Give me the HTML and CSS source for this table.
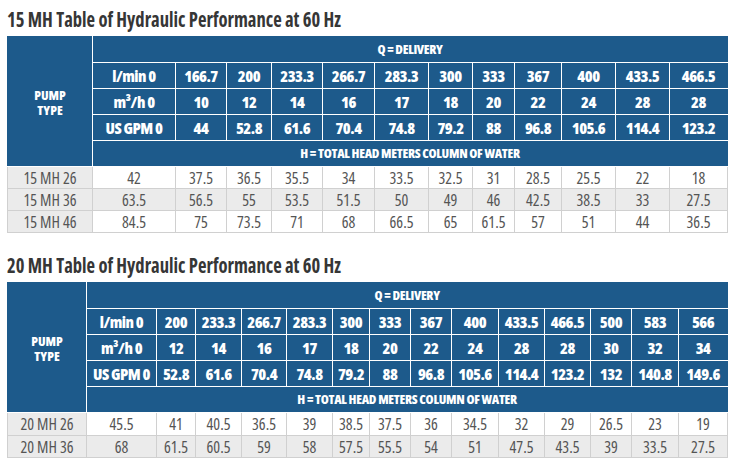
FILE: index.html
```html
<!DOCTYPE html>
<html>
<head>
<meta charset="utf-8">
<link rel="stylesheet" href="styles.css">
</head>
<body>
<div class="page">
  <h2 class="title"><span>15 MH Table of Hydraulic Performance at 60 Hz</span></h2>
  <table class="perf t1">
    <colgroup>
      <col style="width:85px"><col style="width:83px"><col style="width:51px"><col style="width:45px"><col style="width:51px"><col style="width:52px"><col style="width:54px"><col style="width:44px"><col style="width:42px"><col style="width:47px"><col style="width:54px"><col style="width:54px"><col style="width:58px">
    </colgroup>
    <thead>
      <tr><th class="pump" rowspan="5"><span class="ln">PUMP</span><span class="ln">TYPE</span></th><th class="span" colspan="12">Q = DELIVERY</th></tr>
      <tr><th class="unit">l/min 0</th><th>166.7</th><th>200</th><th>233.3</th><th>266.7</th><th>283.3</th><th>300</th><th>333</th><th>367</th><th>400</th><th>433.5</th><th>466.5</th></tr>
      <tr><th class="unit">m³/h 0</th><th>10</th><th>12</th><th>14</th><th>16</th><th>17</th><th>18</th><th>20</th><th>22</th><th>24</th><th>28</th><th>28</th></tr>
      <tr><th class="unit">US GPM 0</th><th>44</th><th>52.8</th><th>61.6</th><th>70.4</th><th>74.8</th><th>79.2</th><th>88</th><th>96.8</th><th>105.6</th><th>114.4</th><th>123.2</th></tr>
      <tr><th class="span" colspan="12">H = TOTAL HEAD METERS COLUMN OF WATER</th></tr>
    </thead>
    <tbody>
      <tr><td class="name">15 MH 26</td><td>42</td><td>37.5</td><td>36.5</td><td>35.5</td><td>34</td><td>33.5</td><td>32.5</td><td>31</td><td>28.5</td><td>25.5</td><td>22</td><td>18</td></tr>
      <tr class="alt"><td class="name">15 MH 36</td><td>63.5</td><td>56.5</td><td>55</td><td>53.5</td><td>51.5</td><td>50</td><td>49</td><td>46</td><td>42.5</td><td>38.5</td><td>33</td><td>27.5</td></tr>
      <tr><td class="name">15 MH 46</td><td>84.5</td><td>75</td><td>73.5</td><td>71</td><td>68</td><td>66.5</td><td>65</td><td>61.5</td><td>57</td><td>51</td><td>44</td><td>36.5</td></tr>
    </tbody>
  </table>

  <h2 class="title second"><span>20 MH Table of Hydraulic Performance at 60 Hz</span></h2>
  <table class="perf t2">
    <colgroup>
      <col style="width:79px"><col style="width:70px"><col style="width:39px"><col style="width:46px"><col style="width:45px"><col style="width:46px"><col style="width:37px"><col style="width:41px"><col style="width:41px"><col style="width:47px"><col style="width:46px"><col style="width:46px"><col style="width:41px"><col style="width:47px"><col style="width:49px">
    </colgroup>
    <thead>
      <tr><th class="pump" rowspan="5"><span class="ln">PUMP</span><span class="ln">TYPE</span></th><th class="span" colspan="14">Q = DELIVERY</th></tr>
      <tr><th class="unit">l/min 0</th><th>200</th><th>233.3</th><th>266.7</th><th>283.3</th><th>300</th><th>333</th><th>367</th><th>400</th><th>433.5</th><th>466.5</th><th>500</th><th>583</th><th>566</th></tr>
      <tr><th class="unit">m³/h 0</th><th>12</th><th>14</th><th>16</th><th>17</th><th>18</th><th>20</th><th>22</th><th>24</th><th>28</th><th>28</th><th>30</th><th>32</th><th>34</th></tr>
      <tr><th class="unit">US GPM 0</th><th>52.8</th><th>61.6</th><th>70.4</th><th>74.8</th><th>79.2</th><th>88</th><th>96.8</th><th>105.6</th><th>114.4</th><th>123.2</th><th>132</th><th>140.8</th><th>149.6</th></tr>
      <tr><th class="span" colspan="14">H = TOTAL HEAD METERS COLUMN OF WATER</th></tr>
    </thead>
    <tbody>
      <tr><td class="name">20 MH 26</td><td>45.5</td><td>41</td><td>40.5</td><td>36.5</td><td>39</td><td>38.5</td><td>37.5</td><td>36</td><td>34.5</td><td>32</td><td>29</td><td>26.5</td><td>23</td><td>19</td></tr>
      <tr class="alt"><td class="name">20 MH 36</td><td>68</td><td>61.5</td><td>60.5</td><td>59</td><td>58</td><td>57.5</td><td>55.5</td><td>54</td><td>51</td><td>47.5</td><td>43.5</td><td>39</td><td>33.5</td><td>27.5</td></tr>
    </tbody>
  </table>
</div>
</body>
</html>
```
FILE: styles.css
```css
* { box-sizing: border-box; }
html, body { margin: 0; padding: 0; background: #fff; }
.page {
  padding: 7px 0 0 7px;
  font-family: "Open Sans", sans-serif;
  font-stretch: 75%;
}
.title {
  margin: 0;
  height: 29px;
  font-size: 21px;
  line-height: 24px;
  font-weight: 700;
  color: #363636;
  white-space: nowrap;
  font-family: "Open Sans", sans-serif;
  font-stretch: 75%;
}
.title span {
  display: inline-block;
  transform: scaleX(0.885);
  transform-origin: left center;
}
.title.second { margin-top: 20px; }
.perf {
  border-collapse: collapse;
  table-layout: fixed;
  width: 720px;
  font-family: "Open Sans", sans-serif;
  font-stretch: 75%;
}
.perf th {
  background: #1d5a8b;
  color: #fff;
  font-weight: 800;
  font-size: 16px;
  height: 26px;
  padding: 0;
  text-align: center;
  border: 1px solid #fff;
  line-height: 1;
  white-space: nowrap;
  letter-spacing: -0.5px;
}
.perf th.span, .perf th.pump { font-size: 13px; letter-spacing: -0.3px; }
.perf th.pump { vertical-align: middle; letter-spacing: 0; padding-top: 2px; }
.perf th.pump .ln { display: block; line-height: 16px; height: 16px; }
.perf th.pump .ln + .ln { margin-top: -1px; }
.perf thead tr:first-child th { border-top-color: #1d5a8b; }
.perf th.pump { border-left-color: #1d5a8b; }
.perf thead tr th:last-child { border-right-color: #1d5a8b; }
.perf td {
  height: 22px;
  padding: 0;
  text-align: center;
  font-size: 16px;
  font-weight: 400;
  color: #555;
  border: 1px solid #d0d0d0;
  background: #fff;
  white-space: nowrap;
  line-height: 1;
}
.perf td.name, .perf tr.alt td { background: #ebebeb; }
.t2 tbody tr:first-child td { height: 23px; }
```
